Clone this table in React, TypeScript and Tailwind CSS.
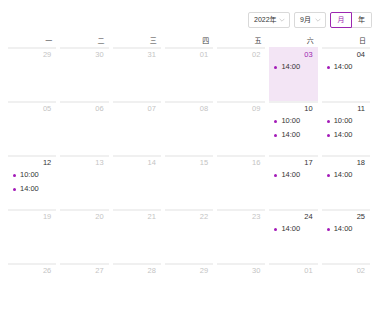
const weekdays = ["一", "二", "三", "四", "五", "六", "日"];

type Day = { label: string; muted?: boolean; selected?: boolean; events?: string[] };

const weeks: Day[][] = [
  [
    { label: "29", muted: true },
    { label: "30", muted: true },
    { label: "31", muted: true },
    { label: "01", muted: true },
    { label: "02", muted: true },
    { label: "03", selected: true, events: ["14:00"] },
    { label: "04", events: ["14:00"] },
  ],
  [
    { label: "05", muted: true },
    { label: "06", muted: true },
    { label: "07", muted: true },
    { label: "08", muted: true },
    { label: "09", muted: true },
    { label: "10", events: ["10:00", "14:00"] },
    { label: "11", events: ["10:00", "14:00"] },
  ],
  [
    { label: "12", events: ["10:00", "14:00"] },
    { label: "13", muted: true },
    { label: "14", muted: true },
    { label: "15", muted: true },
    { label: "16", muted: true },
    { label: "17", events: ["14:00"] },
    { label: "18", events: ["14:00"] },
  ],
  [
    { label: "19", muted: true },
    { label: "20", muted: true },
    { label: "21", muted: true },
    { label: "22", muted: true },
    { label: "23", muted: true },
    { label: "24", events: ["14:00"] },
    { label: "25", events: ["14:00"] },
  ],
  [
    { label: "26", muted: true },
    { label: "27", muted: true },
    { label: "28", muted: true },
    { label: "29", muted: true },
    { label: "30", muted: true },
    { label: "01", muted: true },
    { label: "02", muted: true },
  ],
];

function Chevron() {
  return (
    <svg viewBox="0 0 10 6" className="h-[4px] w-[6px] fill-none stroke-[#bfbfbf] stroke-[1.2]" aria-hidden>
      <path d="M1 1L5 5L9 1" />
    </svg>
  );
}

function Select({ value, width }: { value: string; width: string }) {
  return (
    <div
      className={`flex h-[16px] items-center justify-between rounded-[2px] border border-[#d9d9d9] bg-white pr-[4px] pl-[5px] text-[7px] text-[#333] ${width}`}
    >
      <span>{value}</span>
      <Chevron />
    </div>
  );
}

export default function App() {
  return (
    <div className="h-[315px] w-[384px] overflow-hidden bg-white font-['Liberation_Sans','Noto_Sans_CJK_SC',sans-serif]">
      <div className="flex justify-end gap-[4px] pt-[12px] pr-[12px]">
        <Select value="2022年" width="w-[42px]" />
        <Select value="9月" width="w-[32px]" />
        <div className="flex h-[16px] text-[7px]">
          <div className="flex w-[22px] items-center justify-center rounded-l-[2px] border border-[#9c27b0] text-[#9c27b0]">
            月
          </div>
          <div className="flex w-[20px] items-center justify-center rounded-r-[2px] border border-l-0 border-[#d9d9d9] text-[#333]">
            年
          </div>
        </div>
      </div>

      <div className="ml-[6px] w-[366px]">
        <div className="grid grid-cols-7 pt-[7px]">
          {weekdays.map((w) => (
            <div key={w} className="h-[12px] pr-[6px] text-right text-[7px] leading-[12px] text-[#444]">
              {w}
            </div>
          ))}
        </div>

        {weeks.map((week, i) => (
          <div key={i} className="grid grid-cols-7">
            {week.map((d, j) => (
              <div
                key={j}
                className={`mx-[2px] h-[54px] border-t-2 ${
                  d.selected ? "border-[#f3e5f5] bg-[#f3e5f5]" : "border-[#f0f0f0]"
                }`}
              >
                <div
                  className={`pr-[5px] text-right text-[7.5px] leading-[11px] ${
                    d.selected ? "text-[#9c27b0]" : d.muted ? "text-[#c4c4c4]" : "text-[#333]"
                  }`}
                >
                  {d.label}
                </div>
                {d.events && (
                  <div className="flex flex-col">
                    {d.events.map((e) => (
                      <div key={e} className="flex h-[14px] items-center gap-[4px] pl-[5px] text-[7.5px] text-[#333]">
                        <span className="h-[3px] w-[3px] rounded-full bg-[#a31ab8]" />
                        <span>{e}</span>
                      </div>
                    ))}
                  </div>
                )}
              </div>
            ))}
          </div>
        ))}
      </div>
    </div>
  );
}
